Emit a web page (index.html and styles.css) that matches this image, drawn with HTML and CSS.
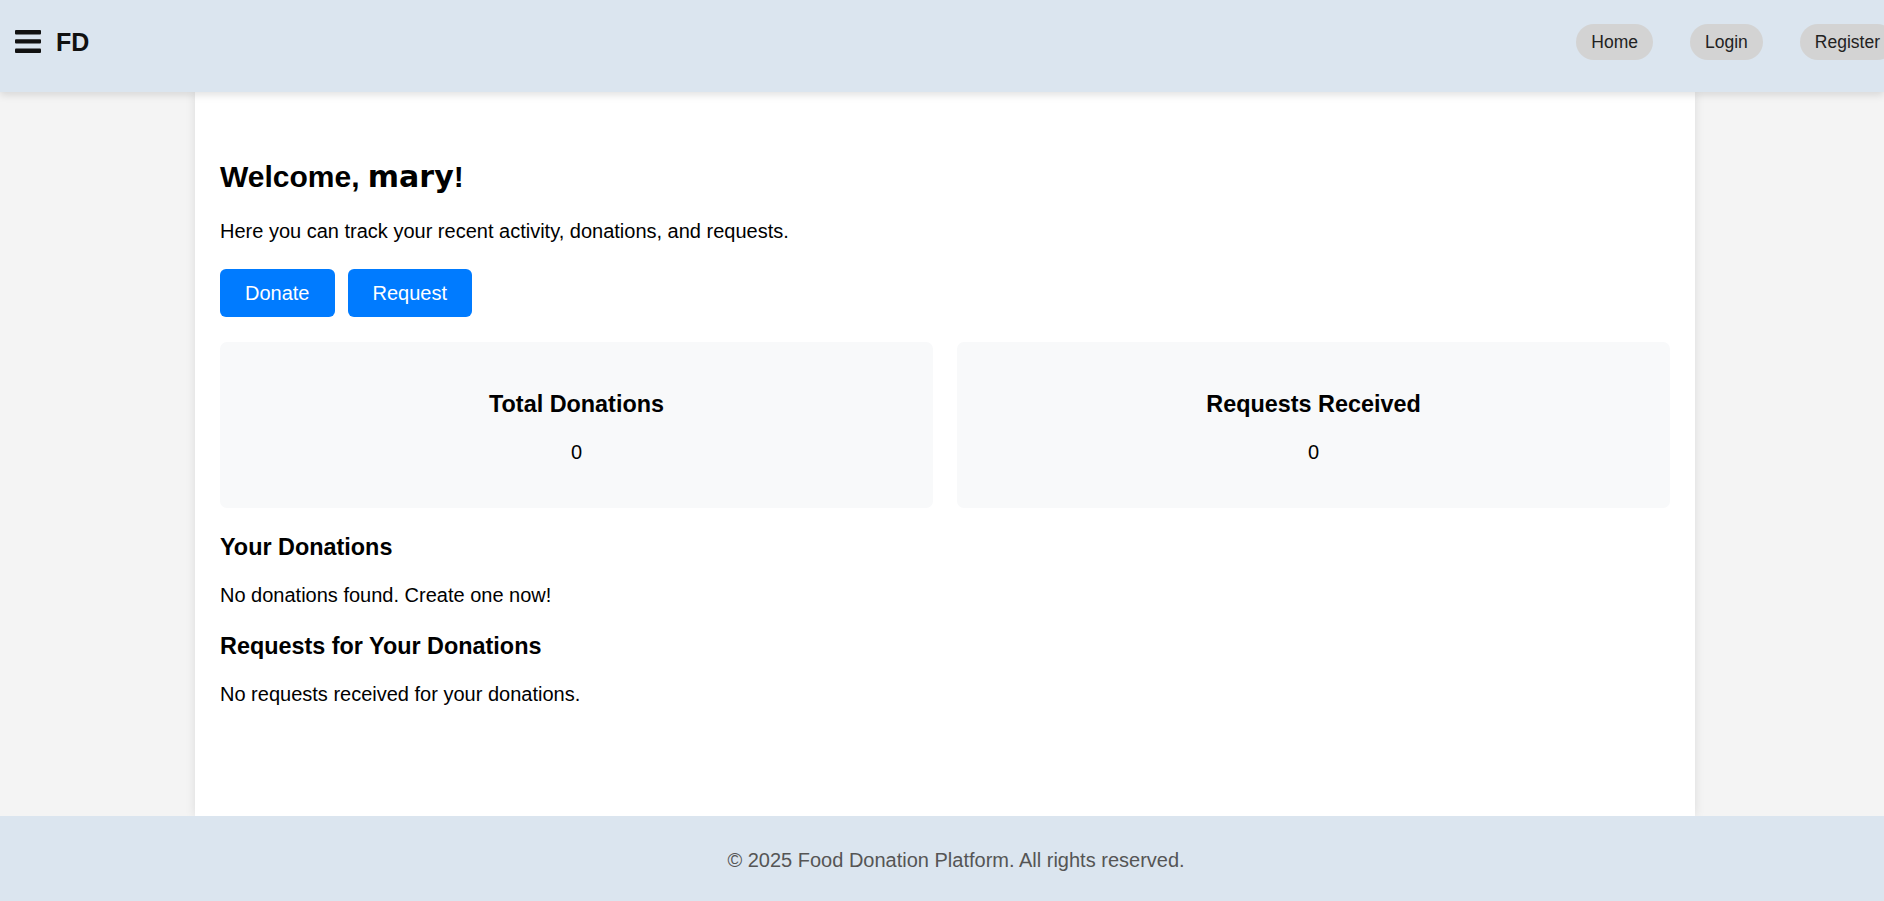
FILE: index.html
```html
<!DOCTYPE html>
<html lang="en">
<head>
<meta charset="utf-8">
<title>Dashboard - Food Donation Platform</title>
<link rel="stylesheet" href="styles.css">
</head>
<body>
<header class="topbar">
  <div class="brand">
    <svg class="menu-icon" width="27" height="24" viewBox="0 0 27 24" aria-hidden="true">
      <rect x="0" y="0" width="26" height="4.4" rx="1"/>
      <rect x="0" y="9.2" width="26" height="4.4" rx="1"/>
      <rect x="0" y="18.6" width="26" height="4.4" rx="1"/>
    </svg>
    <span class="logo">FD</span>
  </div>
  <nav class="nav">
    <a class="nav-link" href="#">Home</a>
    <a class="nav-link" href="#">Login</a>
    <a class="nav-link" href="#">Register</a>
  </nav>
</header>

<main class="dashboard">
  <h2 class="welcome">Welcome, <span class="username">mary</span>!</h2>
  <p class="intro">Here you can track your recent activity, donations, and requests.</p>
  <div class="actions">
    <a class="btn" href="#">Donate</a>
    <a class="btn" href="#">Request</a>
  </div>
  <div class="stats">
    <div class="stat-card">
      <h3 class="stat-title">Total Donations</h3>
      <p class="stat-value">0</p>
    </div>
    <div class="stat-card">
      <h3 class="stat-title">Requests Received</h3>
      <p class="stat-value">0</p>
    </div>
  </div>
  <h3 class="section-title">Your Donations</h3>
  <p class="empty">No donations found. Create one now!</p>
  <h3 class="section-title">Requests for Your Donations</h3>
  <p class="empty">No requests received for your donations.</p>
</main>

<footer class="footer">
  <p class="footer-text">&copy; 2025 Food Donation Platform. All rights reserved.</p>
</footer>
</body>
</html>
```

FILE: styles.css
```css
* {
  box-sizing: border-box;
}

html, body {
  margin: 0;
  padding: 0;
}

body {
  font-family: "Liberation Sans", Arial, sans-serif;
  font-size: 20px;
  color: #000;
  background: #f4f4f4;
  min-height: 100vh;
  display: flex;
  flex-direction: column;
  overflow-x: hidden;
}

.topbar {
  position: relative;
  z-index: 2;
  height: 92px;
  background: #dbe5ef;
  display: flex;
  align-items: center;
  justify-content: space-between;
  padding: 0 0 8px 15px;
  box-shadow: 0 3px 8px rgba(0, 0, 0, 0.12);
  overflow: hidden;
  flex-shrink: 0;
}

.brand {
  display: flex;
  align-items: center;
  gap: 14px;
}

.menu-icon {
  display: block;
  fill: #111;
}

.logo {
  font-weight: bold;
  font-size: 25px;
  color: #111;
  line-height: 1;
}

.nav {
  display: flex;
  gap: 37px;
  margin-right: -11px;
}

.nav-link {
  display: block;
  background: #d3d3d3;
  color: #222;
  text-decoration: none;
  font-size: 17.5px;
  line-height: 20px;
  padding: 8px 15px;
  border-radius: 20px;
  white-space: nowrap;
}

.dashboard {
  flex: 1;
  width: 1500px;
  margin: 0 auto 0 calc(50% - 747px);
  background: #fff;
  padding: 42px 25px 25px;
  box-shadow: 0 0 10px rgba(0, 0, 0, 0.1);
}

.welcome {
  font-size: 30px;
  font-weight: bold;
  margin: 25px 0 26px;
}

.username {
  font-family: "DejaVu Sans", Verdana, sans-serif;
}

.intro {
  margin: 0 0 26px;
  line-height: 23px;
}

.actions {
  display: flex;
  gap: 13px;
}

.btn {
  display: block;
  background: #007bff;
  color: #fff;
  text-decoration: none;
  font-size: 20px;
  line-height: 23px;
  padding: 12.5px 25px;
  border-radius: 6px;
}

.stats {
  display: grid;
  grid-template-columns: 1fr 1fr;
  gap: 24px;
  margin-top: 25px;
}

.stat-card {
  background: #f8f9fa;
  border-radius: 7px;
  padding: 25px;
  text-align: center;
}

.stat-title {
  font-size: 23.4px;
  margin: 24px 0 23px;
}

.stat-value {
  margin: 0 0 19px;
  line-height: 23px;
}

.section-title {
  font-size: 23.4px;
  margin: 26px 0 23px;
}

.empty {
  margin: 0;
  line-height: 23px;
}

.footer {
  background: #dbe5ef;
  padding: 33px 0 29px 28px;
  text-align: center;
  flex-shrink: 0;
}

.footer-text {
  margin: 0;
  color: #555;
  line-height: 23px;
}
```
